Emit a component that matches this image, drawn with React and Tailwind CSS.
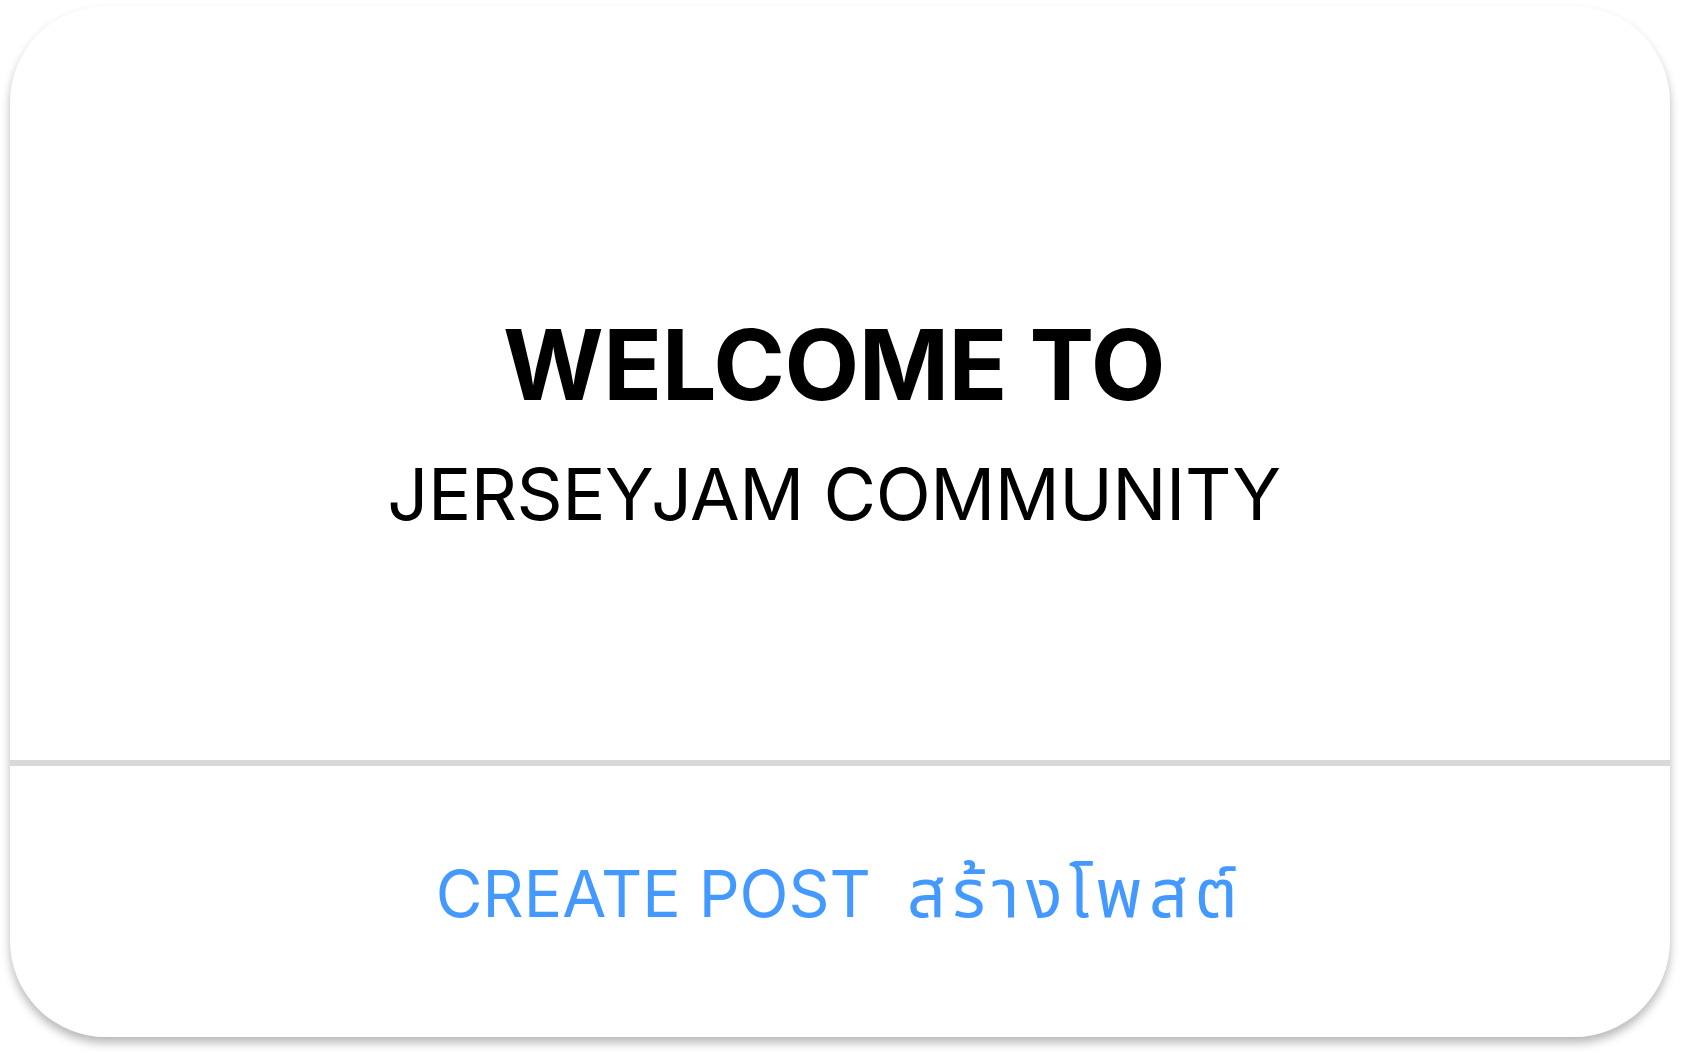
import React from 'react';

export default function App() {
  return (
    <div className="w-[1684px] h-[1060px] bg-white pt-[6px] pl-[10px]" style={{ fontFamily: 'Inter, "Noto Sans", sans-serif' }}>
      <div className="w-[1660px] h-[1031px] bg-white rounded-[96px] shadow-[0_6px_10px_rgba(0,0,0,0.28)] flex flex-col overflow-hidden">
        <div className="h-[754px] pt-[310px] pr-[12px] flex flex-col items-center text-black">
          <h1 className="text-[97px] leading-none font-bold tracking-[-0.5px]">WELCOME TO</h1>
          <p className="mt-[45px] text-[72px] leading-none font-normal tracking-[-0.5px]">JERSEYJAM COMMUNITY</p>
        </div>
        <div className="h-[6px] bg-[#d9d9d9]" />
        <div className="flex-1 pt-[96px] flex justify-center">
          <button className="flex items-baseline gap-[36px] text-[64px] leading-none text-[#4499ff]">
            <span>CREATE POST</span>
            <span className="text-[68px] tracking-[6.5px]" style={{ fontFamily: '"Noto Sans Thai", "Noto Sans Thai UI", "Noto Sans", sans-serif' }}>สร้างโพสต์</span>
          </button>
        </div>
      </div>
    </div>
  );
}
